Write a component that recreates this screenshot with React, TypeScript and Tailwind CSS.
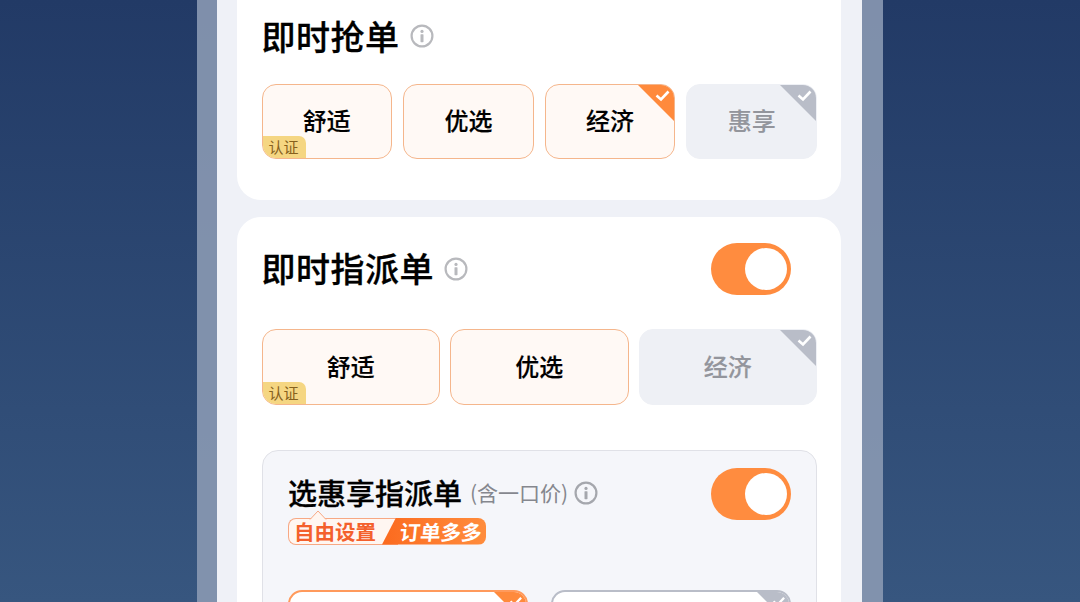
const font = "font-['Noto_Sans_CJK_SC','Noto_Sans',sans-serif]";

function InfoIcon({ className = 'text-[#b8b9bd]' }: { className?: string }) {
  return (
    <svg width="24" height="24" viewBox="0 0 24 24" fill="none" className={`shrink-0 ${className}`}>
      <circle cx="12" cy="12" r="10.4" stroke="currentColor" strokeWidth="2.2" />
      <circle cx="12" cy="7.4" r="1.6" fill="currentColor" />
      <rect x="10.5" y="10.2" width="3" height="8" rx="0.6" fill="currentColor" />
    </svg>
  );
}

function Toggle() {
  return (
    <div className="w-[80px] h-[52px] rounded-full bg-[#ff8c3f] flex items-center justify-end pr-[4px] shrink-0">
      <div className="w-[42px] h-[42px] rounded-full bg-white" />
    </div>
  );
}

function Corner({ off, size = 36 }: { off?: boolean; size?: number }) {
  return (
    <svg width={size} height={size} viewBox="0 0 36 36" className="absolute top-0 right-0">
      <path d="M0 0H36V36Z" fill={off ? '#b9bdc8' : '#ff8a3c'} />
      <path d="M18.5 10.5l4.5 4 7.5-8" fill="none" stroke="white" strokeWidth="2.6" />
    </svg>
  );
}

function Badge() {
  return (
    <span className="absolute -left-px -bottom-px w-[44px] h-[23px] rounded-tr-[7px] rounded-bl-[13px] bg-[#f5d682] text-[#86601c] text-[15px] font-normal leading-[21px] text-center [-webkit-text-stroke:0px]">
      认证
    </span>
  );
}

function Option({ label, off, corner, cert }: { label: string; off?: boolean; corner?: boolean; cert?: boolean }) {
  return (
    <div
      className={`relative h-[75.5px] flex-1 overflow-hidden rounded-[14px] border-[1.5px] flex items-center justify-center pb-[2px] text-[24px] font-medium [-webkit-text-stroke:0.15px] ${
        off ? 'bg-[#eef0f5] border-[#eef0f5] text-[#93959c]' : 'bg-[#fff9f5] border-[#f5b68c] text-black'
      }`}
    >
      {label}
      {(corner || off) && <Corner off={off} />}
      {cert && <Badge />}
    </div>
  );
}

function PromoTag() {
  return (
    <div className="relative flex w-[198px] h-[27px] text-[20.5px] leading-[25px] font-bold">
      <svg width="18" height="10" viewBox="0 0 18 10" className="absolute left-[21px] -top-[8px]">
        <path d="M1 9.5L9 1l8 8.5" fill="#fff6f1" stroke="#f7a884" strokeWidth="1" />
      </svg>
      <div className="w-[110px] pl-[5px] rounded-l-[8px] border border-r-0 border-[#f7a884] bg-[#fff6f1] text-[#f4602c]">
        自由设置
      </div>
      <div className="absolute right-0 top-0 h-[27px] w-[104px] pl-[18px] leading-[27px] rounded-r-[8px] bg-gradient-to-r from-[#fb6a1e] to-[#ff8c3c] text-white [clip-path:polygon(14px_0,100%_0,100%_100%,0_100%)]">
        <span className="inline-block -skew-x-6">订单多多</span>
      </div>
    </div>
  );
}

export default function App() {
  return (
    <div className={`h-[602px] overflow-hidden bg-gradient-to-b from-[#223a66] to-[#37567f] ${font}`}>
      <div className="ml-[197px] w-[686px] h-full pl-[20px] pr-[21px] bg-[#8a99b3]/90">
        <div className="h-full pl-[20px] pr-[21px] bg-[#eff1f7]">
          {/* 即时抢单 */}
          <section className="h-[200px] rounded-b-[24px] bg-white pl-[24.5px] pr-[24px] pt-[11px]">
            <div className="flex items-center gap-[10px] h-[50px]">
              <h2 className="-mt-[2px] text-[34px] tracking-[0.5px] font-medium [-webkit-text-stroke:0.3px] text-black">即时抢单</h2>
              <InfoIcon />
            </div>
            <div className="flex gap-[11px] mt-[22.5px]">
              <Option label="舒适" cert />
              <Option label="优选" />
              <Option label="经济" corner />
              <Option label="惠享" off />
            </div>
          </section>

          {/* 即时指派单 */}
          <section className="mt-[17px] h-[500px] rounded-[24px] bg-white pl-[24.5px] pr-[24px] pt-[26px]">
            <div className="flex items-center justify-between pr-[26px]">
              <div className="flex items-center gap-[10px]">
                <h2 className="-mt-[4px] text-[34px] tracking-[0.5px] font-medium [-webkit-text-stroke:0.3px] text-black">即时指派单</h2>
                <InfoIcon />
              </div>
              <Toggle />
            </div>
            <div className="flex gap-[10px] mt-[34px]">
              <Option label="舒适" cert />
              <Option label="优选" />
              <Option label="经济" off />
            </div>

            <div className="mt-[45px] h-[300px] rounded-[16px] border border-[#e0e1e7] bg-[#f5f6fa] pl-[25.5px] pr-[25px] pt-[17px]">
              <div className="flex justify-between">
                <div>
                  <div className="flex items-center h-[50px]">
                    <h3 className="text-[29px] font-medium [-webkit-text-stroke:0.3px] text-black">选惠享指派单</h3>
                    <span className="ml-[8px] text-[21px] text-[#85878e]">(含一口价)</span>
                    <InfoIcon className="ml-[6px] text-[#a5a7ad]" />
                  </div>
                  <PromoTag />
                </div>
                <Toggle />
              </div>
              <div className="flex gap-[23px] mt-[45px]">
                <div className="relative h-[76px] flex-1 overflow-hidden rounded-[14px] border-2 border-[#ff9a5c] bg-white">
                  <Corner size={32} />
                </div>
                <div className="relative h-[76px] flex-1 overflow-hidden rounded-[14px] border-2 border-[#b9bdc8] bg-white">
                  <Corner off size={32} />
                </div>
              </div>
            </div>
          </section>
        </div>
      </div>
    </div>
  );
}
